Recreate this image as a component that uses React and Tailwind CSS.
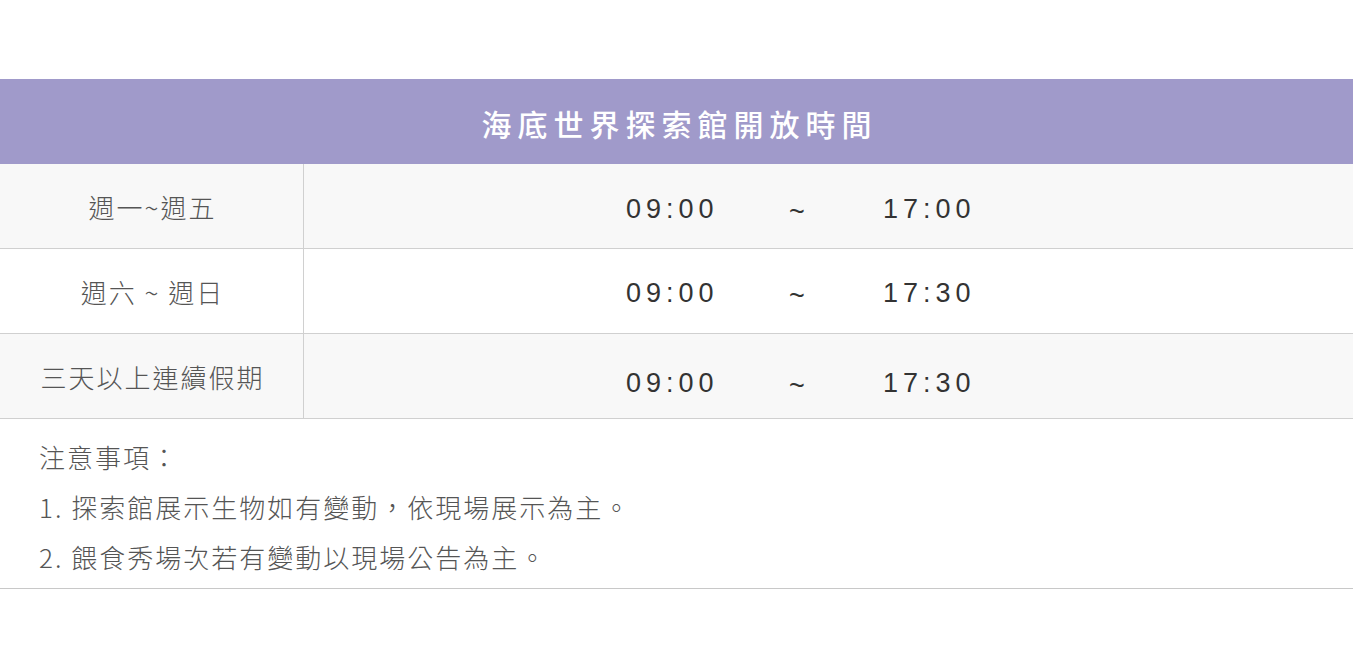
export default function App() {
  const rows = [
    { label: '週一~週五', open: '09:00', close: '17:00', bg: 'bg-[#f8f8f8]', shift: 'pt-[6px]' },
    { label: '週六 ~ 週日', open: '09:00', close: '17:30', bg: 'bg-white', shift: 'pt-[4px]' },
    { label: '三天以上連續假期', open: '09:00', close: '17:30', bg: 'bg-[#f8f8f8]', shift: 'pt-[15px]' }
  ];

  return (
    <div className="min-h-screen bg-white pt-[79px] font-['Noto_Sans_CJK_TC','Noto_Sans',sans-serif]">
      <div className="h-[85px] bg-[#a09aca] flex items-center justify-center pt-[4px]">
        <h1 className="text-[30px] font-medium text-white tracking-[6px] pl-[6px]">海底世界探索館開放時間</h1>
      </div>

      {rows.map((row, i) => (
        <div key={i} className={`flex h-[85px] border-b border-[#d0d0d0] ${row.bg}`}>
          <div className="w-[304px] shrink-0 border-r border-[#d0d0d0] flex items-center justify-center text-[26px] text-[#555] tracking-[2px] pl-[2px] font-light">
            {row.label}
          </div>
          <div className={`flex-1 flex items-center pl-[322px] font-['Liberation_Sans',Arial,sans-serif] text-[27px] text-[#333] tracking-[5px] ${row.shift}`}>
            <span className="w-[163px]">{row.open}</span>
            <span className="w-[94px] translate-y-[3px]">~</span>
            <span>{row.close}</span>
          </div>
        </div>
      ))}

      <div className="border-b border-[#c8c8c8] pl-[39px] pt-[13px] pb-[6px] text-[26px] text-[#555] tracking-[2px] font-light leading-[50px]">
        <p>注意事項：</p>
        <p>1. 探索館展示生物如有變動，依現場展示為主。</p>
        <p>2. 餵食秀場次若有變動以現場公告為主。</p>
      </div>
    </div>
  );
}
